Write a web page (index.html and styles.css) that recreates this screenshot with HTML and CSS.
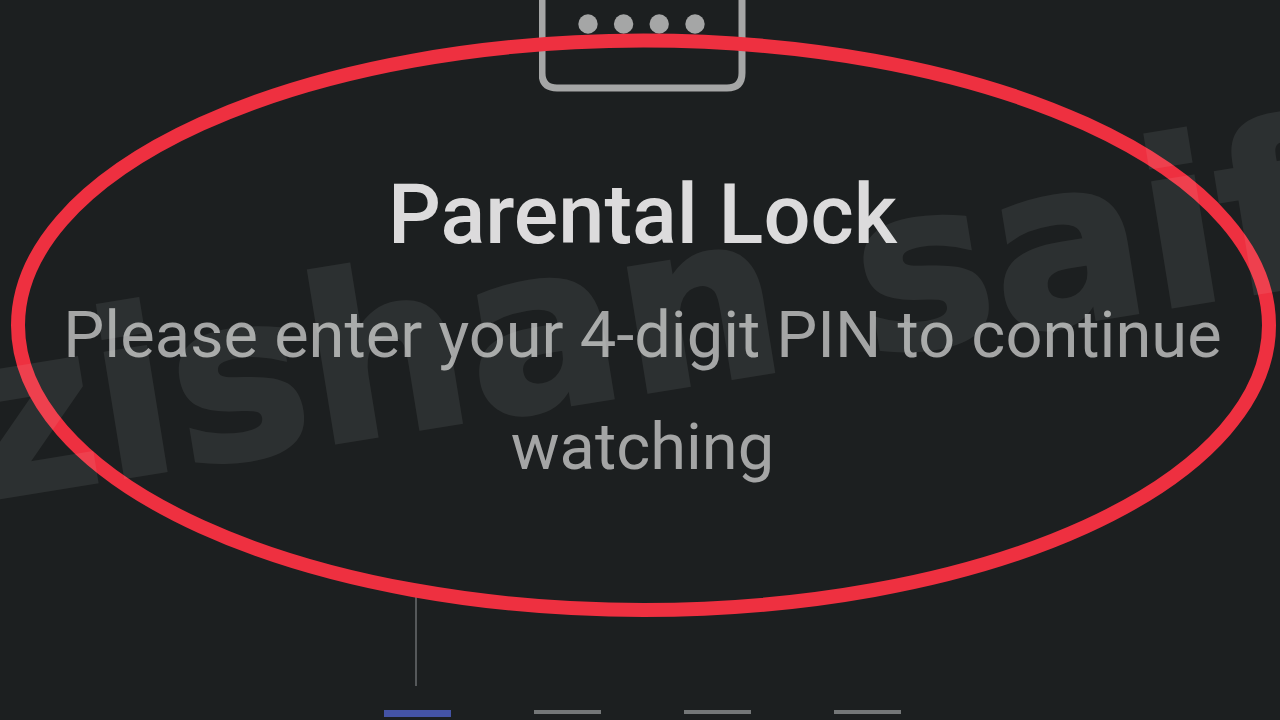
FILE: index.html
```html
<!DOCTYPE html>
<html lang="en">
<head>
<meta charset="utf-8">
<meta name="viewport" content="width=device-width, initial-scale=1">
<title>Parental Lock</title>
<link rel="stylesheet" href="styles.css">
</head>
<body>
<main class="lock">
  <svg class="lock-icon" viewBox="0 0 208 92" aria-hidden="true">
    <path d="M3 -10V73Q3 88 18 88H188Q203 88 203 73V-10" fill="none" stroke="#a5a6a6" stroke-width="7"/>
    <g fill="#a5a6a6"><circle cx="49" cy="24" r="9.7"/><circle cx="84.600" cy="24" r="9.7"/><circle cx="120.200" cy="24" r="9.7"/><circle cx="156" cy="24" r="9.7"/></g>
  </svg>
  <h1 class="title">Parental Lock</h1>
  <p class="message">Please enter your 4-digit PIN to continue watching</p>
  <form class="pin">
    <div class="cell active"><input class="digit" type="password" maxlength="1" inputmode="numeric" aria-label="PIN digit 1"><span class="caret"></span></div>
    <div class="cell"><input class="digit" type="password" maxlength="1" inputmode="numeric" aria-label="PIN digit 2"></div>
    <div class="cell"><input class="digit" type="password" maxlength="1" inputmode="numeric" aria-label="PIN digit 3"></div>
    <div class="cell"><input class="digit" type="password" maxlength="1" inputmode="numeric" aria-label="PIN digit 4"></div>
  </form>
</main>
<svg class="overlay" viewBox="0 0 1280 720" aria-hidden="true">
  <ellipse class="ring" cx="643.500" cy="325.300" rx="625.500" ry="284.700"/>
  <text class="watermark" transform="translate(-24 501) rotate(-9.240)">zishan saif</text>
</svg>
</body>
</html>
```
FILE: styles.css
```css
* { box-sizing: border-box; }

body {
  position: relative;
  min-height: 100vh;
  margin: 0;
  overflow: hidden;
  background: #1c1f20;
  font-family: Roboto, "Liberation Sans", sans-serif;
}

.lock {
  display: flex;
  flex-direction: column;
  align-items: center;
  padding: 0 32px 0 37px;
  text-align: center;
}

.lock-icon {
  display: block;
  width: 208px;
  height: 92px;
}

.title {
  margin: 73px 0 0;
  color: #dcdbdc;
  font-size: 83px;
  font-weight: 500;
  line-height: 100px;
}

.message {
  margin: 14px 0 0;
  color: #a4a5a5;
  font-size: 65px;
  line-height: 112px;
}

.pin {
  display: flex;
  gap: 83px;
  margin-top: 87px;
}

.cell {
  position: relative;
  height: 124px;
  border-bottom: 4px solid #747778;
}

.cell.active {
  height: 127px;
  border-bottom: 7px solid #4453a5;
}

.digit {
  display: block;
  width: 67px;
  height: 120px;
  padding: 0;
  border: 0;
  outline: 0;
  background: transparent;
  color: #dcdbdc;
  font: 64px Roboto, sans-serif;
  text-align: center;
}

.caret {
  position: absolute;
  top: 0;
  left: 31px;
  width: 2px;
  height: 96px;
  background: #55585a;
}

.overlay {
  position: absolute;
  inset: 0;
  width: 100%;
  height: 100%;
  pointer-events: none;
}

.ring {
  fill: none;
  stroke: #ee3040;
  stroke-width: 14px;
}

.watermark {
  fill: #f4fffb;
  stroke: #f4fffb;
  stroke-width: 4px;
  opacity: 0.075;
  font: bold 228px "DejaVu Sans", sans-serif;
}
```
